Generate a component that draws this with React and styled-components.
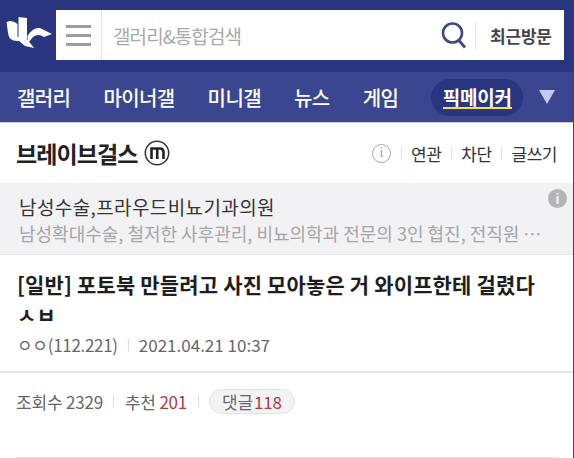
import styled, { createGlobalStyle } from 'styled-components'

const KR = `'Noto Sans CJK KR', 'Noto Sans', sans-serif`

const GlobalStyle = createGlobalStyle`
  html, body {
    margin: 0;
    padding: 0;
    background: #fff;
    font-family: ${KR};
  }
  * {
    box-sizing: border-box;
  }
`

const App = () => {
  return (
    <>
      <GlobalStyle />
      <Page>
        <TopBar>
          <Logo viewBox='0 1 56 44'>
            <path fill='#fff' d='M6.5 10 L10 9 Q14 9 17.5 12 L17.5 25 L18.5 25 L18.5 5 L27 6 L27 27 L34 36 L25 34 L19 29 Q9 30 8 21 Z' />
            <path fill='#fff' d='M27.5 24 Q33 15 40 16 L52 22 L44 25 Q38 21 33 25 L28 31 Z' />
          </Logo>
          <SearchBox>
            <MenuButton>
              <MenuLine />
              <MenuLine />
              <MenuLine />
            </MenuButton>
            <SearchText>갤러리&통합검색</SearchText>
            <SearchIcon viewBox='0 0 26 28'>
              <circle cx='11.5' cy='12' r='9.5' fill='none' stroke='#3b4a86' strokeWidth='2.6' />
              <path d='M17.5 19 L24 26.5' stroke='#3b4a86' strokeWidth='2.8' fill='none' />
            </SearchIcon>
            <SearchDivider />
            <RecentButton>최근방문</RecentButton>
          </SearchBox>
        </TopBar>

        <NavBar>
          <NavItem>갤러리</NavItem>
          <NavItem>마이너갤</NavItem>
          <NavItem>미니갤</NavItem>
          <NavItem>뉴스</NavItem>
          <NavItem>게임</NavItem>
          <NavPill>
            <NavUnderline>픽메이커</NavUnderline>
          </NavPill>
          <NavArrow />
        </NavBar>

        <BoardHeader>
          <BoardTitle>
            브레이브걸스
            <MinorBadge viewBox='0 0 26 26'>
              <circle cx='13' cy='13' r='11.7' fill='none' stroke='#333' strokeWidth='1.5' />
              <path d='M7.5 19 V8.5 H16 Q19.5 8.5 19.5 12 V19 M13.2 8.5 V19' fill='none' stroke='#222' strokeWidth='2.6' />
            </MinorBadge>
          </BoardTitle>
          <BoardActions>
            <InfoIcon>i</InfoIcon>
            <ActionDivider />
            <ActionLink>연관</ActionLink>
            <ActionDivider />
            <ActionLink>차단</ActionLink>
            <ActionDivider />
            <ActionLink>글쓰기</ActionLink>
          </BoardActions>
        </BoardHeader>

        <AdBox>
          <AdTitle>남성수술,프라우드비뇨기과의원</AdTitle>
          <AdText>남성확대수술, 철저한 사후관리, 비뇨의학과 전문의 3인 협진, 전직원 ⋯</AdText>
          <AdBadge>i</AdBadge>
        </AdBox>

        <PostHead>
          <PostTitle>[일반] 포토북 만들려고 사진 모아놓은 거 와이프한테 걸렸다 ㅅㅂ</PostTitle>
          <PostMeta>
            <PostWriter>ㅇㅇ(112.221)</PostWriter>
            <MetaDivider />
            <span>2021.04.21 10:37</span>
          </PostMeta>
        </PostHead>

        <Stats>
          <span>조회수 2329</span>
          <MetaDivider $gap={10.5} />
          <span>
            추천 <Count>201</Count>
          </span>
          <MetaDivider $gap={10.5} />
          <CommentPill>
            댓글<Count>118</Count>
          </CommentPill>
        </Stats>

        <BottomRule />
      </Page>
    </>
  )
}

const Page = styled.div`
  position: relative;
  width: 574px;
  height: 458px;
  overflow: hidden;
  background: #fff;
  border-right: 1px solid #444;
`

const TopBar = styled.header`
  display: flex;
  align-items: center;
  height: 72px;
  padding: 0 9px 2px 0;
  background: #29357f;
`

const Logo = styled.svg`
  flex: none;
  width: 56px;
  height: 44px;
`

const SearchBox = styled.div`
  display: flex;
  flex: 1;
  align-items: center;
  height: 50px;
  background: #fff;
`

const MenuButton = styled.div`
  display: flex;
  flex: none;
  flex-direction: column;
  justify-content: center;
  gap: 6px;
  width: 46px;
  height: 100%;
  padding: 0 10px;
  border-right: 1px solid #e2e4ec;
`

const MenuLine = styled.span`
  display: block;
  height: 3px;
  background: #9a9ca6;
`

const SearchText = styled.div`
  flex: 1;
  padding-left: 11px;
  color: #a8a8ae;
  font-size: 19px;
  letter-spacing: -0.9px;
`

const SearchIcon = styled.svg`
  flex: none;
  width: 26px;
  height: 28px;
  margin-right: 8px;
`

const SearchDivider = styled.span`
  flex: none;
  width: 1px;
  height: 28px;
  margin-right: 14px;
  background: #e4e6ee;
`

const RecentButton = styled.div`
  flex: none;
  width: 74px;
  color: #444;
  font-size: 17px;
  font-weight: 700;
  letter-spacing: -0.2px;
`

const NavBar = styled.nav`
  display: flex;
  align-items: center;
  height: 51px;
  padding: 0 16px 0 17px;
  background: #3a468f;
  border-bottom: 1px solid #c9cbdc;
`

const NavItem = styled.div`
  margin-right: 33px;
  color: #fff;
  font-size: 20px;
  font-weight: 500;
  letter-spacing: -0.6px;
  white-space: nowrap;
`

const NavPill = styled.div`
  display: flex;
  align-items: center;
  justify-content: center;
  width: 92px;
  height: 37px;
  border-radius: 19px;
  background: #29357f;
`

const NavUnderline = styled.span`
  color: #fff;
  font-size: 19px;
  font-weight: 700;
  line-height: 21px;
  letter-spacing: -0.2px;
  border-bottom: 2px solid #f4e04d;
`

const NavArrow = styled.span`
  width: 0;
  height: 0;
  margin-left: 16px;
  border-top: 14px solid #c3caf5;
  border-left: 8px solid transparent;
  border-right: 8px solid transparent;
`

const BoardHeader = styled.div`
  display: flex;
  align-items: center;
  justify-content: space-between;
  height: 60px;
  padding: 0 16px;
`

const BoardTitle = styled.h1`
  display: flex;
  align-items: center;
  gap: 6px;
  margin: 0;
  color: #222;
  font-size: 23px;
  font-weight: 700;
  letter-spacing: -0.9px;
`

const MinorBadge = styled.svg`
  flex: none;
  width: 26px;
  height: 26px;
`

const BoardActions = styled.div`
  display: flex;
  align-items: center;
`

const InfoIcon = styled.span`
  display: flex;
  align-items: center;
  justify-content: center;
  width: 19px;
  height: 19px;
  border: 1px solid #a8a8a8;
  border-radius: 50%;
  color: #a0a0a0;
  font-family: 'Liberation Serif', serif;
  font-size: 14px;
`

const ActionDivider = styled.span`
  width: 1px;
  height: 13px;
  margin: 0 9.5px;
  background: #e2e2e2;
`

const ActionLink = styled.span`
  color: #333;
  font-size: 17px;
  letter-spacing: -0.5px;
`

const AdBox = styled.div`
  position: relative;
  height: 72px;
  padding: 10px 18px 0 19px;
  background: #f2f2f4;
  border-bottom: 1px solid #e8e8ee;
`

const AdTitle = styled.div`
  color: #333;
  font-size: 19px;
  line-height: 28px;
  letter-spacing: 0.4px;
`

const AdText = styled.div`
  color: #a4a4a8;
  font-size: 18px;
  line-height: 25px;
  white-space: nowrap;
`

const AdBadge = styled.span`
  position: absolute;
  top: 6px;
  right: 6px;
  display: flex;
  align-items: center;
  justify-content: center;
  width: 19px;
  height: 19px;
  border-radius: 50%;
  background: #b4b4b6;
  color: #f2f2f4;
  font-family: 'Liberation Sans', sans-serif;
  font-size: 14px;
  font-weight: 700;
`

const PostHead = styled.div`
  height: 118px;
  padding: 14px 16px 0 17px;
  border-bottom: 2px solid #e8e8ea;
`

const PostTitle = styled.h2`
  height: 65px;
  margin: 0;
  overflow: hidden;
  color: #1e1e1e;
  font-size: 21px;
  font-weight: 700;
  line-height: 30px;
  letter-spacing: 0.15px;
`

const PostMeta = styled.div`
  display: flex;
  align-items: center;
  color: #666;
  font-size: 17px;
  line-height: 22px;
`

const PostWriter = styled.span`
  letter-spacing: -0.3px;
`

const MetaDivider = styled.span`
  width: 1px;
  height: 12px;
  margin: 0 ${props => props.$gap || 10}px;
  background: #dcdce0;
`

const Stats = styled.div`
  display: flex;
  align-items: center;
  height: 56px;
  padding: 0 16px;
  color: #666;
  font-size: 17px;
  letter-spacing: -0.2px;
`

const Count = styled.span`
  color: #b03a40;
`

const CommentPill = styled.span`
  display: flex;
  align-items: center;
  gap: 1px;
  height: 25px;
  padding: 0 12px;
  border: 1px solid #e2e2e8;
  border-radius: 13px;
  background: #f3f3f6;
`

const BottomRule = styled.div`
  position: absolute;
  right: 15px;
  bottom: 0;
  left: 16px;
  height: 1px;
  background: #e4e4e8;
`

export default App
